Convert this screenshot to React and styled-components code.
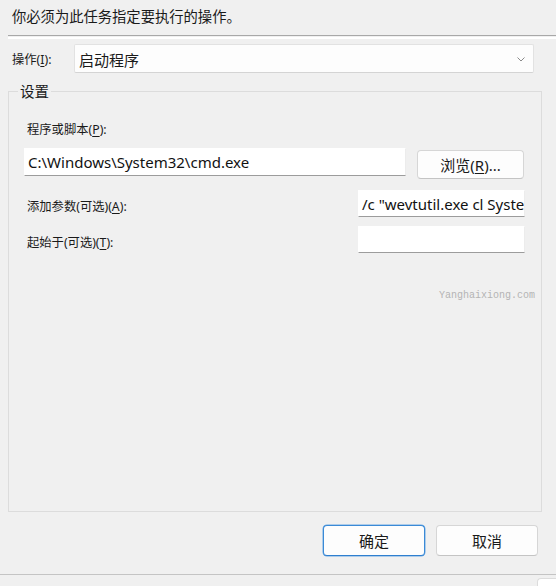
import React from "react";
import styled, { createGlobalStyle } from "styled-components";

const Global = createGlobalStyle`
  html, body { margin: 0; padding: 0; }
  body {
    background: #f0f0f0;
    width: 556px;
    height: 586px;
    overflow: hidden;
    font-family: "Noto Sans", "Noto Sans CJK SC", sans-serif;
    color: #1a1a1a;
  }
`;

const Page = styled.div`
  width: 556px;
  height: 586px;
  display: flex;
  flex-direction: column;
  background: #f0f0f0;
  overflow: hidden;
  & > * { flex-shrink: 0; }
`;

const Header = styled.div`
  height: 35px;
  box-sizing: border-box;
  padding: 6px 0 0 12px;
  font-family: "Noto Sans CJK SC", sans-serif;
  font-size: 14.3px;
  line-height: 19px;
  color: #1a1a1a;
`;

const Divider = styled.div`
  margin-left: 8px;
  height: 1px;
  background: #a8a8a8;
  border-bottom: 1px solid #f0f0f0;
  box-shadow: 0 2px 0 #ffffff;
`;

const ActionRow = styled.div`
  display: flex;
  align-items: center;
  margin-top: 7px;
  padding-left: 12px;
`;

const Label = styled.span`
  font-family: "Noto Sans", "Noto Sans CJK SC", sans-serif;
  font-size: ${(p) => p.$size || 12.3}px;
  line-height: 16px;
  color: #1a1a1a;
  white-space: nowrap;
  padding-top: ${(p) => p.$offset || 0}px;
  padding-left: ${(p) => p.$indent || 0}px;
  u { text-decoration-thickness: 1px; text-underline-offset: 2px; }
`;

const Select = styled.div`
  margin-left: auto;
  margin-right: 22px;
  width: 460px;
  height: 29px;
  box-sizing: border-box;
  background: #fdfdfd;
  border: 1px solid #e2e2e2;
  border-bottom-color: #d4d4d4;
  border-radius: 2px;
  display: flex;
  align-items: center;
  padding: 2px 8px 0 4px;
  font-family: "Noto Sans CJK SC", sans-serif;
  font-size: 15px;
  color: #1a1a1a;
`;

const Chevron = styled.svg`
  margin-left: auto;
  width: 8px;
  height: 5px;
`;

const Group = styled.fieldset`
  margin: 9px 14px 0 8px;
  padding: 0;
  border: 1px solid #dcdcdc;
  border-radius: 0;
  min-width: 0;
`;

const Legend = styled.legend`
  margin-left: 9px;
  padding: 0 2px;
  font-family: "Noto Sans CJK SC", sans-serif;
  font-size: 14.5px;
  line-height: 18px;
  color: #1a1a1a;
`;

const GroupBody = styled.div`
  height: 411px;
  box-sizing: border-box;
  padding: 22px 16px 0 15px;
  display: flex;
  flex-direction: column;
`;

const PathRow = styled.div`
  display: flex;
  align-items: flex-start;
  margin-top: 10px;
`;

const TextBox = styled.div`
  box-sizing: border-box;
  width: ${(p) => p.$w}px;
  height: ${(p) => p.$h || 28}px;
  background: #ffffff;
  border: 1px solid #ececec;
  border-bottom-color: #9c9c9c;
  border-top-color: #ffffff;
  border-left-color: #ffffff;
  padding: 0 0 0 3px;
  display: flex;
  align-items: center;
  overflow: hidden;
  white-space: nowrap;
  font-family: "Noto Sans", "Noto Sans CJK SC", sans-serif;
  font-size: 15px;
  color: #111;
`;

const Button = styled.button`
  box-sizing: border-box;
  width: ${(p) => p.$w || 102}px;
  height: ${(p) => p.$h || 31}px;
  margin-top: ${(p) => p.$mt || 0}px;
  margin-left: ${(p) => p.$ml || 0}px;
  background: #fdfdfd;
  border: 1px solid ${(p) => (p.$primary ? "#3a8ad6" : "#d6d6d6")};
  border-bottom-color: ${(p) => (p.$primary ? "#2f7fcf" : "#c4c4c4")};
  box-shadow: ${(p) => (p.$primary ? "0 0 0 0.5px #6aa8e4" : "none")};
  border-radius: 4px;
  padding: 0;
  font-family: "Noto Sans", "Noto Sans CJK SC", sans-serif;
  font-size: ${(p) => p.$fs || 15}px;
  color: #1a1a1a;
  display: flex;
  align-items: center;
  justify-content: center;
  u { text-decoration-thickness: 1px; text-underline-offset: 2px; }
`;

const FieldGrid = styled.div`
  display: grid;
  grid-template-columns: 1fr 167px;
  row-gap: 9px;
  margin-top: 11px;
  align-items: center;
`;

const Watermark = styled.div`
  margin-top: 37px;
  align-self: flex-end;
  margin-right: -10px;
  font-family: "Liberation Mono", "DejaVu Sans Mono", monospace;
  font-size: 10px;
  line-height: 12px;
  color: #b4b4b4;
`;

const Footer = styled.div`
  display: flex;
  justify-content: flex-end;
  padding: 13px 18px 0 0;
`;

const BottomBar = styled.div`
  margin-top: 18px;
  border-top: 1px solid #c4c4c4;
  height: 12px;
  display: flex;
  justify-content: flex-end;
  padding-top: 3px;
`;

const Corner = styled.div`
  width: 18px;
  height: 12px;
  background: #ffffff;
  border: 1px solid #dcdcdc;
  border-right: none;
  border-bottom: none;
  border-top-left-radius: 4px;
`;

export default function App() {
  return (
    <Page>
      <Global />
      <Header>你必须为此任务指定要执行的操作。</Header>
      <Divider />
      <ActionRow>
        <Label $offset={3}>
          操作(<u>I</u>):
        </Label>
        <Select>
          启动程序
          <Chevron viewBox="0 0 8 5">
            <path d="M0.5 0.5 L4 4 L7.5 0.5" fill="none" stroke="#8a8a8a" strokeWidth="1" />
          </Chevron>
        </Select>
      </ActionRow>
      <Group>
        <Legend>设置</Legend>
        <GroupBody>
          <Label $indent={3}>
            程序或脚本(<u>P</u>):
          </Label>
          <PathRow>
            <TextBox $w={382}>C:\Windows\System32\cmd.exe</TextBox>
            <Button $w={107} $h={29} $mt={2} $ml={11}>
              浏览(<u>R</u>)...
            </Button>
          </PathRow>
          <FieldGrid>
            <Label $offset={7} $indent={3}>
              添加参数(可选)(<u>A</u>):
            </Label>
            <TextBox $w={167} $h={27}>/c "wevtutil.exe cl Syste</TextBox>
            <Label $offset={7} $indent={3}>
              起始于(可选)(<u>T</u>):
            </Label>
            <TextBox $w={167} $h={27} />
          </FieldGrid>
          <Watermark>Yanghaixiong.com</Watermark>
        </GroupBody>
      </Group>
      <Footer>
        <Button $primary>确定</Button>
        <Button $ml={11}>取消</Button>
      </Footer>
      <BottomBar>
        <Corner />
      </BottomBar>
    </Page>
  );
}
